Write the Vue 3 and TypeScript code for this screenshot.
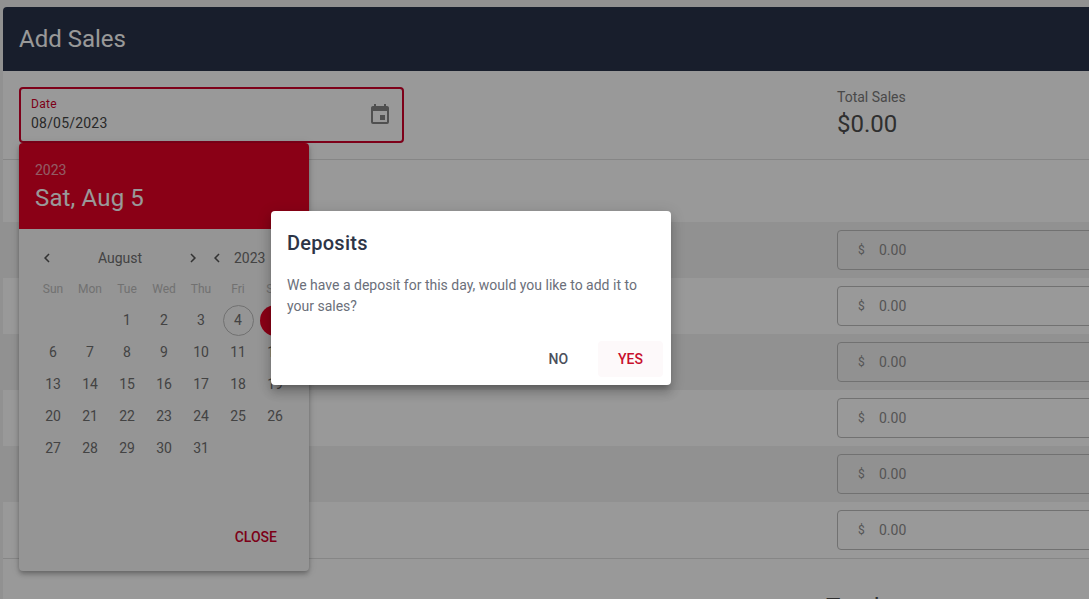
<script setup lang="ts">
// Add Sales page with the date picker open and the deposits dialog on top.
const rows = [1, 2, 3, 4, 5, 6]
const weekdays = ['Sun', 'Mon', 'Tue', 'Wed', 'Thu', 'Fri', 'Sat']

// August 2023 starts on a Tuesday
const blanks = [0, 1]
const days = Array.from({ length: 31 }, (_, i) => i + 1)

const chevronLeft = 'M15.41,16.58L10.83,12L15.41,7.41L14,6L8,12L14,18L15.41,16.58Z'
const chevronRight = 'M8.59,16.58L13.17,12L8.59,7.41L10,6L16,12L10,18L8.59,16.58Z'
const calendar =
  'M19,19H5V8H19M16,1V3H8V1H6V3H5C3.89,3 3,3.89 3,5V19A2,2 0 0,0 5,21H19A2,2 0 0,0 21,19V5C21,3.89 20.1,3 19,3H18V1M17,12H12V17H17V12Z'
</script>

<template>
  <div class="page">
    <main class="card">
      <header class="card-head">Add Sales</header>

      <section class="summary">
        <div class="date-field">
          <div class="date-text">
            <span class="date-label">Date</span>
            <span class="date-value">08/05/2023</span>
          </div>
          <svg class="date-icon" viewBox="0 0 24 24"><path :d="calendar" /></svg>
        </div>
        <div class="total">
          <span class="total-label">Total Sales</span>
          <span class="total-value">$0.00</span>
        </div>
      </section>

      <section class="rows">
        <div v-for="row in rows" :key="row" class="row">
          <div class="money">
            <span class="money-sign">$</span>
            <span class="money-value">0.00</span>
          </div>
        </div>
      </section>

      <h2 class="totals">Totals</h2>
    </main>

    <div class="picker">
      <div class="picker-head">
        <div class="picker-year">2023</div>
        <div class="picker-date">Sat, Aug 5</div>
      </div>
      <div class="picker-body">
        <div class="picker-nav">
          <svg class="chev first" viewBox="0 0 24 24"><path :d="chevronLeft" /></svg>
          <span class="nav-month">August</span>
          <svg class="chev" viewBox="0 0 24 24"><path :d="chevronRight" /></svg>
          <svg class="chev prev-year" viewBox="0 0 24 24"><path :d="chevronLeft" /></svg>
          <span class="nav-year">2023</span>
        </div>
        <div class="cal">
          <span v-for="w in weekdays" :key="w" class="weekday">{{ w }}</span>
          <span v-for="b in blanks" :key="'b' + b" class="day"></span>
          <span v-for="d in days" :key="d" class="day">
            <span class="day-num" :class="{ today: d === 4, selected: d === 5 }">{{ d }}</span>
          </span>
        </div>
      </div>
      <div class="picker-actions">
        <span class="close">CLOSE</span>
      </div>
    </div>

    <div class="scrim"></div>

    <div class="dialog">
      <div class="dialog-title">Deposits</div>
      <p class="dialog-text">We have a deposit for this day, would you like to add it to your sales?</p>
      <div class="dialog-actions">
        <button class="btn no">NO</button>
        <button class="btn yes">YES</button>
      </div>
    </div>
  </div>
</template>

<style>
body { margin: 0; }
</style>

<style scoped>
.page {
  position: relative;
  width: 1089px;
  height: 599px;
  overflow: hidden;
  background: #f2f2f2;
  font-family: Roboto, "Liberation Sans", sans-serif;
  color: #333;
}
.card {
  margin: 7px 0 0 3px;
  width: 1200px;
  height: 700px;
  background: #fff;
  border-radius: 4px 0 0 0;
}
.card-head {
  height: 64px;
  padding-left: 16px;
  line-height: 65px;
  font-size: 24px;
  color: #fff;
  background: #28324a;
  border-radius: 4px 0 0 0;
}
.summary {
  display: flex;
  height: 89px;
  padding: 16px 0 0 16px;
  box-sizing: border-box;
  border-bottom: 1px solid #e0e0e0;
}
.date-field {
  display: flex;
  align-items: center;
  justify-content: space-between;
  box-sizing: border-box;
  width: 385px;
  height: 56px;
  padding: 0 10px;
  border: 2px solid #d0002a;
  border-radius: 4px;
}
.date-text { display: flex; flex-direction: column; align-self: flex-start; padding-top: 7px; }
.date-label { font-size: 12px; line-height: 16px; color: #d0002a; letter-spacing: 0.3px; }
.date-value { font-size: 14px; line-height: 20px; color: #454545; letter-spacing: 0.2px; margin-top: 1px; }
.date-icon { width: 24px; height: 24px; fill: #858585; }
.total { display: flex; flex-direction: column; margin-left: 433px; }
.total-label { font-size: 14px; line-height: 20px; color: #7a7a7a; }
.total-value { font-size: 24px; line-height: 34px; color: #4f4f4f; }
.rows {
  margin-top: 62px;
  border-bottom: 1px solid #e0e0e0;
}
.row {
  height: 56px;
  padding: 8px 0 0 834px;
  box-sizing: border-box;
}
.row:nth-child(odd) { background: #f2f2f2; }
.money {
  display: flex;
  align-items: center;
  box-sizing: border-box;
  width: 300px;
  height: 40px;
  padding-left: 20px;
  border: 1px solid #bdbdbd;
  border-radius: 4px;
  font-size: 14px;
  color: #8e8e8e;
}
.money-sign { font-size: 12px; width: 21px; }
.totals {
  margin: 32px 0 0 823px;
  font-size: 24px;
  line-height: 32px;
  font-weight: 400;
  color: #4f4f4f;
}

.picker {
  position: absolute;
  left: 19px;
  top: 143px;
  width: 290px;
  height: 428px;
  display: flex;
  flex-direction: column;
  background: #f8f8f8;
  border-radius: 4px;
  box-shadow: 0 2px 4px -1px rgba(0, 0, 0, 0.2), 0 4px 5px rgba(0, 0, 0, 0.14), 0 1px 10px rgba(0, 0, 0, 0.12);
  overflow: hidden;
}
.picker-head {
  height: 86px;
  box-sizing: border-box;
  padding: 17px 16px 0;
  background: #e60025;
  color: #fff;
}
.picker-year { font-size: 14px; line-height: 20px; opacity: 0.6; }
.picker-date { font-size: 24px; line-height: 34px; margin-top: 1px; letter-spacing: 0.15px; }
.picker-body { flex: 1; padding: 20px 15.5px 0; }
.picker-nav {
  display: flex;
  align-items: center;
  height: 18px;
  font-size: 14px;
  color: #707070;
}
.chev { width: 18px; height: 18px; flex: none; fill: #555; }
.chev.first { margin-left: 3.5px; }
.prev-year { margin-left: 6px; }
.nav-month { width: 128px; text-align: center; }
.nav-year { margin-left: 8px; }
.cal {
  display: grid;
  grid-template-columns: repeat(7, 37px);
  grid-template-rows: 31px;
  grid-auto-rows: 32px;
  margin-top: 6px;
}
.weekday {
  display: flex;
  align-items: center;
  justify-content: center;
  font-size: 12px;
  color: #bdbdbd;
}
.day {
  display: flex;
  align-items: center;
  justify-content: center;
  font-size: 14px;
  color: #707070;
}
.day-num {
  display: flex;
  align-items: center;
  justify-content: center;
  box-sizing: border-box;
  width: 31px;
  height: 31px;
  border-radius: 50%;
}
.day-num.today { border: 1px solid #bdbdbd; }
.day-num.selected { background: #e60025; color: #fff; }
.picker-actions {
  display: flex;
  justify-content: flex-end;
  padding: 0 32px 26px 0;
}
.close { font-size: 14px; font-weight: 500; color: #d0002a; }

.scrim {
  position: absolute;
  inset: 0;
  background: rgba(0, 0, 0, 0.4);
}
.dialog {
  position: absolute;
  left: 271px;
  top: 211px;
  width: 400px;
  height: 174px;
  display: flex;
  flex-direction: column;
  box-sizing: border-box;
  padding: 16px 8px 8px 16px;
  background: #fff;
  border-radius: 4px;
  box-shadow: 0 5px 5px -3px rgba(0, 0, 0, 0.2), 0 8px 10px 1px rgba(0, 0, 0, 0.14), 0 3px 14px 2px rgba(0, 0, 0, 0.12);
}
.dialog-title { font-size: 20px; line-height: 32px; font-weight: 500; color: #2d3446; letter-spacing: 0.25px; }
.dialog-text {
  margin: 16px 8px 0 0;
  font-size: 14px;
  line-height: 21px;
  color: #6b6f7a;
}
.dialog-actions {
  display: flex;
  justify-content: flex-end;
  margin-top: auto;
}
.btn {
  height: 36px;
  padding: 0 20px;
  border: none;
  border-radius: 4px;
  background: transparent;
  font-family: inherit;
  font-size: 14px;
  font-weight: 500;
}
.btn.no { color: #4b4f5c; margin-right: 10px; }
.btn.yes { color: #c8102e; background: #fdf9fa; }
</style>
